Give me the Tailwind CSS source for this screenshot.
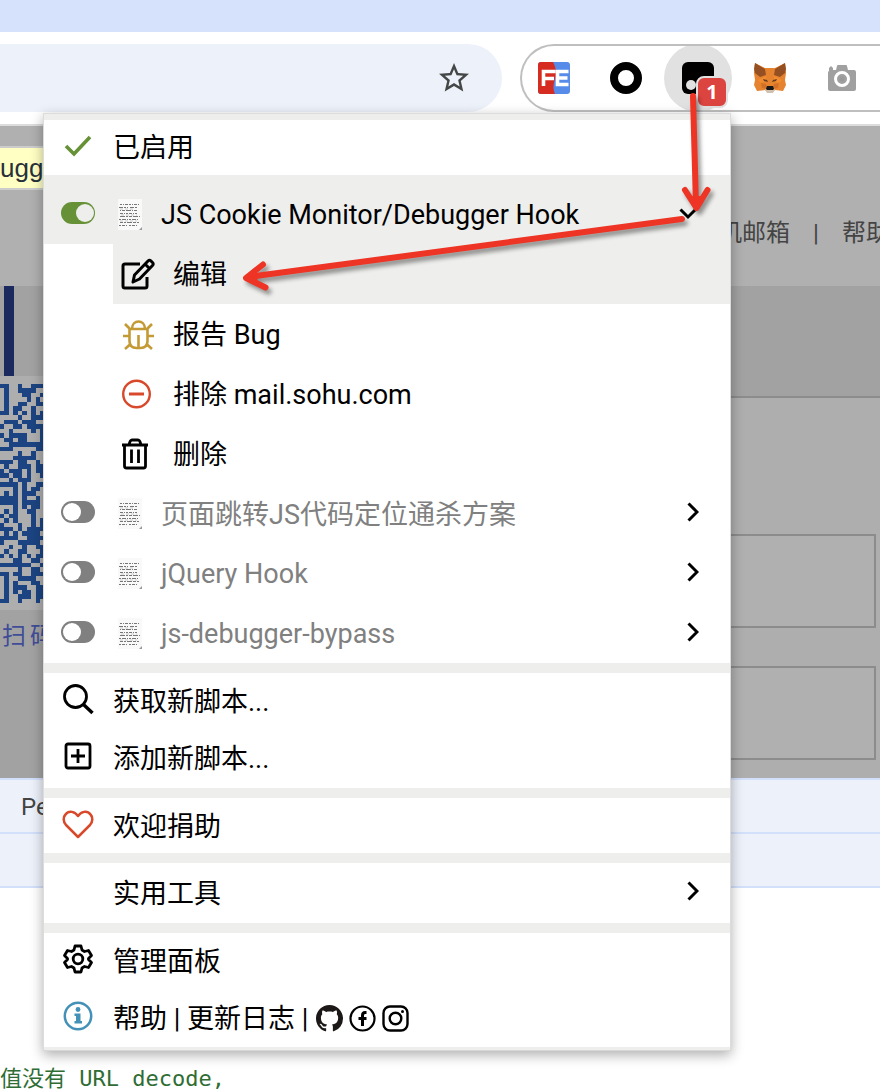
<!DOCTYPE html>
<html lang="zh-CN">
<head>
<meta charset="utf-8">
<meta name="viewport" content="width=device-width, initial-scale=1">
<title>Tampermonkey</title>
<script src="https://cdn.jsdelivr.net/npm/@tailwindcss/browser@4"></script>
</head>
<body class="relative min-h-screen overflow-x-hidden bg-white font-['Roboto','Noto_Sans_CJK_SC',sans-serif] text-black">

<!-- Shared icons -->
<svg class="hidden" aria-hidden="true">
  <symbol id="chevron" viewBox="0 0 12 20"><path d="M1.500 1.500 10 10 1.500 18.500" fill="none" stroke="#000" stroke-width="3"/></symbol>
  <symbol id="paper" viewBox="0 0 24 32">
    <rect width="24" height="31" fill="#f9f9f9"/>
    <g fill="none" stroke="#777" stroke-width="1">
      <path d="M2 5.500h19" stroke-dasharray="2 1 1 1 3 1"/>
      <path d="M1 8.500h19" stroke-dasharray="4 1 2 1 1 2"/>
      <path d="M2 11.500h17" stroke-dasharray="1 1 3 1 5 1"/>
      <path d="M2 14.500h18" stroke-dasharray="3 1 1 1 2 1"/>
      <path d="M2 17.500h20" stroke-dasharray="5 1 2 1 3 1"/>
      <path d="M1 20.500h20" stroke-dasharray="2 1 4 1 1 1"/>
      <path d="M2 23.500h19" stroke-dasharray="3 1 2 1 5 1"/>
      <path d="M1 26.500h20" stroke-dasharray="2 1 3 1 1 2"/>
    </g>
    <path d="M2 10h15M3 16h16M2 22h17" stroke="#ccc" stroke-width="1" stroke-dasharray="3 2"/>
    <path d="M24 28v3h-3z" fill="#999"/>
  </symbol>
</svg>

<!-- Browser chrome -->
<div class="h-8 bg-[#d6e1fc]"></div>
<header class="flex h-[92px] items-start gap-[18px] pt-3">
  <div class="flex h-17 w-[502px] shrink-0 items-center justify-end rounded-r-full bg-[#edf1fa] pr-[30px]">
    <button aria-label="收藏"><svg class="size-9" viewBox="0 0 24 24" fill="#444746"><path d="m22 9.240-7.190-.62L12 2 9.190 8.630 2 9.240l5.460 4.730L5.820 21 12 17.270 18.180 21l-1.630-7.030L22 9.240zM12 15.400l-3.760 2.270 1-4.280-3.320-2.880 4.380-.38L12 6.100l1.710 4.040 4.380.38-3.320 2.880 1 4.280L12 15.400z"/></svg></button>
  </div>
  <div class="flex h-17 flex-1 items-center overflow-hidden rounded-l-full border-2 border-r-0 border-[#bfbfbf] pl-4">
    <button class="mr-10 shrink-0" aria-label="FeHelper">
      <svg class="size-8" viewBox="0 0 32 32"><rect width="32" height="32" rx="3" fill="#568bea"/><path d="M3 0h12c3 6 4 11 2 17s-2 10 0 15H3a3 3 0 0 1-3-3V3a3 3 0 0 1 3-3z" fill="#d62b21"/><path d="M17.500 9.500H5.500V24M6 16.500h10M30.500 9.500H19.500v13h11M19 16h10.500" fill="none" stroke="#fff" stroke-width="3.600"/></svg>
    </button>
    <button class="mr-[22px] shrink-0" aria-label="扩展">
      <svg class="size-8" viewBox="0 0 32 32"><circle cx="16" cy="16" r="12" fill="none" stroke="#000" stroke-width="8"/></svg>
    </button>
    <button class="relative mr-[22px] flex size-17 shrink-0 items-center justify-center rounded-full bg-[#e1e1e1]" aria-label="Tampermonkey">
      <svg class="size-8" viewBox="0 0 32 32"><rect width="32" height="32" rx="6"/><circle cx="9" cy="23" r="5" fill="#e1e1e1"/></svg>
      <span class="absolute top-8 left-8 flex size-8 items-center justify-center rounded-lg border-2 border-[#e1e1e1] bg-[#dc443f] font-['Open_Sans',sans-serif] text-xl font-bold text-white">1</span>
    </button>
    <button class="mr-10 shrink-0" aria-label="MetaMask">
      <svg class="size-8" viewBox="0 0 32 32">
        <path d="M1 1l10 5h10l10-5 1 10-1 7 1 5-3 6-8-1-3 3h-4l-3-3-8 1-3-6 1-5-1-7z" fill="#e5832f"/>
        <path d="M1 1l10 6 1 6-6 2-5-4-1-4zM31 1l-10 6-1 6 6 2 5-4 1-4z" fill="#945022"/>
        <path d="M4 18l8-4v5l-5 2zM28 18l-8-4v5l5 2z" fill="#f28c2e"/>
        <path d="M7 21l5 1 2 5-6-1zM25 21l-5 1-2 5 6-1z" fill="#d27028"/>
        <path d="M9 17l4 1 1 2-4-1zM23 17l-4 1-1 2 4-1z" fill="#623c27"/>
        <path d="M11 27h10l-2 4h-6z" fill="#d0c2b2"/><path d="M13 24h6l1 3-1 1h-6l-1-1z" fill="#171717"/>
      </svg>
    </button>
    <button class="shrink-0" aria-label="截图">
      <svg class="size-8" viewBox="0 0 32 32"><path d="M3 9V6l2-2 2 2v2h3l1-4q0-1 1-1h8q1 0 1 1l1 4h6q2 0 2 2v17q0 2-2 2H4q-2 0-2-2V11q0-2 1-2z" fill="#a0a0a0"/><circle cx="16" cy="17" r="6.500" fill="#a0a0a0" stroke="#fff" stroke-width="3"/><circle cx="16" cy="17" r="2.500" fill="#999"/></svg>
    </button>
  </div>
</header>

<!-- Dimmed web page -->
<main class="border-t-2 border-[#dcdcdc] text-[#444]">
  <div class="flex h-40 items-start bg-[#b0b0b0]">
    <div class="mt-5 h-11 w-[120px] shrink-0 border-y-2 border-[#ccc] bg-[#ffffc4] font-['Liberation_Sans',sans-serif] text-[26px] leading-10 text-[#27303a]">ugg</div>
    <div class="mt-[89px] flex pl-[598px] text-2xl leading-9 whitespace-nowrap"><span>机邮箱</span><span class="w-[52px] text-center">|</span><span>帮助</span></div>
  </div>
  <div class="flex h-[112px] border-b-2 border-[#8c8c8c] bg-[#a2a2a2]">
    <div class="h-[90px] w-[44px] pl-1"><div class="h-full w-[10px] bg-[#1b2a5e]"></div></div>
  </div>
  <div class="flex h-[380px] bg-[#aeaeae]">
    <aside class="w-[52px] shrink-0 bg-[#a2a2a2]">
      <div class="-mt-[22px] h-[234px] bg-[#aeaeae] pt-2"><svg id="qr" class="h-[219px] w-[49px]" viewBox="0 0 11 49" preserveAspectRatio="none" fill="#1c4482" shape-rendering="crispEdges"></svg></div>
      <div class="flex gap-1 pt-[6px] pl-[2px] text-2xl leading-10 whitespace-nowrap text-[#3f4c97]"><span>扫</span><span>码</span></div>
    </aside>
    <form class="flex flex-1 flex-col gap-[38px] pt-[136px] pr-1 pl-[300px]">
      <input class="h-[94px] w-full border-2 border-[#8c8c8c] bg-[#b0b0b0]" aria-label="账号">
      <input class="h-[94px] w-full border-2 border-[#8c8c8c] bg-[#b0b0b0]" type="password" aria-label="密码">
    </form>
  </div>
</main>

<!-- DevTools -->
<section class="font-['Roboto',sans-serif] text-[#444]">
  <div class="h-14 border-y-2 border-[#d3e0fb] bg-[#edf1fa] pl-[21px] text-2xl leading-[54px]">Pe</div>
  <div class="h-[54px] border-b-2 border-[#d3e0fb] bg-[#edf1fa]"></div>
  <pre class="h-[204px] overflow-hidden pt-[178px] font-['DejaVu_Sans_Mono','Noto_Sans_CJK_SC',monospace] text-[22px] leading-[26px] text-[#2f6d34]">值没有 URL decode,</pre>
</section>

<!-- Extension popup -->
<nav class="absolute top-[113px] right-[149px] left-[43px] border border-[#dcdcdc] border-b-[#d8d8d8] bg-white text-[27px] leading-9 whitespace-nowrap shadow-[0_4px_12px_rgba(0,0,0,0.32)]">
  <div class="h-[6px] bg-[#eeeeec]"></div>
  <button class="flex h-[55px] w-full items-center text-left">
    <span class="w-[69px] pb-1 pl-5"><svg class="h-6 w-7" viewBox="0 0 28 24"><path d="M2 12l8 8L26 3" fill="none" stroke="#669136" stroke-width="3.600"/></svg></span>已启用
  </button>

  <div class="flex h-[69px] items-center bg-[#eeeeec] pt-[10px] pr-[33px]">
    <span class="flex w-[74px] pb-1 pl-[17px]"><input type="checkbox" checked aria-label="JS Cookie Monitor/Debugger Hook" class="h-[22px] w-[34px] appearance-none rounded-full bg-[#669136] p-[2px] before:ml-[13px] before:block before:size-[18px] before:rounded-full before:bg-[#eeeeec] before:content-['']"></span>
    <svg class="mr-[19px] h-8 w-6"><use href="#paper"/></svg>
    <span class="flex-1">JS Cookie Monitor/Debugger Hook</span>
    <button class="pb-[2px]" aria-label="收起"><svg class="h-3 w-[18px]" viewBox="0 0 18 12"><path d="M1.500 1.500 9 9l7.500-7.500" fill="none" stroke="#000" stroke-width="3"/></svg></button>
  </div>

  <div class="pl-[69px]">
    <button class="flex h-[60px] w-full items-center bg-[#eeeeec] pt-[2px] pl-2 text-left">
      <span class="w-[52px] pb-[2px]"><svg class="size-[34px]" viewBox="0 0 34 34" fill="none" stroke="#000" stroke-width="3" stroke-linejoin="round"><path d="M19 7H4q-2 0-2 2v20q0 2 2 2h20q2 0 2-2v-9"/><path d="M12 25l1.500-7L27 4q1.500-1.500 3 0l1.500 1.500q1.500 1.500 0 3L18.500 22zM24 7l5 5"/></svg></span>编辑
    </button>
    <button class="flex h-[60px] w-full items-center pt-[2px] pl-2 text-left">
      <span class="w-[52px] pb-[2px]"><svg class="size-[34px]" viewBox="0 0 34 34" fill="none" stroke="#c49a35" stroke-width="2.600"><path d="M8.500 12h18v12q0 7-7 7h-4q-7 0-7-7zM11 12c0-10 13-10 13 0M17.500 18v13M8.500 19H2M26.500 19H33M9 12L4 7M26 12l5-5M9.500 27L4 32M25.500 27l5.500 5"/></svg></span>报告 Bug
    </button>
    <button class="flex h-[60px] w-full items-center pt-[2px] pl-2 text-left">
      <span class="w-[52px] pb-[2px]"><svg class="size-[34px]" viewBox="0 0 34 34" fill="none" stroke="#d7492a"><circle cx="15.500" cy="17" r="13.300" stroke-width="2.400"/><path d="M8 17h15" stroke-width="3"/></svg></span>排除 mail.sohu.com
    </button>
    <button class="flex h-[60px] w-full items-center pt-[2px] pl-2 text-left">
      <span class="w-[52px] pb-[2px]"><svg class="size-[34px]" viewBox="0 0 34 34" fill="none" stroke="#000" stroke-width="2.800"><path d="M1 8h26M3.500 8v21q0 2 2 2h17q2 0 2-2V8M8 8q1-5 3-5h6q2 0 3 5M10.500 12.500V26M17.500 12.500V26"/></svg></span>删除
    </button>
  </div>

  <div class="flex h-[60px] items-center pr-[31px] text-[#808080]">
    <span class="flex w-[74px] pb-1 pl-[17px]"><input type="checkbox" aria-label="页面跳转JS代码定位通杀方案" class="h-[22px] w-[34px] appearance-none rounded-full bg-[#808080] p-[2px] before:block before:size-[18px] before:rounded-full before:bg-white before:content-['']"></span>
    <svg class="mr-[19px] h-8 w-6"><use href="#paper"/></svg><span class="flex-1 pt-[2px]">页面跳转JS代码定位通杀方案</span>
    <button class="pb-1" aria-label="展开"><svg class="h-5 w-3"><use href="#chevron"/></svg></button>
  </div>
  <div class="flex h-[60px] items-center pr-[31px] text-[#808080]">
    <span class="flex w-[74px] pb-1 pl-[17px]"><input type="checkbox" aria-label="jQuery Hook" class="h-[22px] w-[34px] appearance-none rounded-full bg-[#808080] p-[2px] before:block before:size-[18px] before:rounded-full before:bg-white before:content-['']"></span>
    <svg class="mr-[19px] h-8 w-6"><use href="#paper"/></svg><span class="flex-1">jQuery Hook</span>
    <button class="pb-1" aria-label="展开"><svg class="h-5 w-3"><use href="#chevron"/></svg></button>
  </div>
  <div class="flex h-[59px] items-center pr-[31px] text-[#808080]">
    <span class="flex w-[74px] pb-1 pl-[17px]"><input type="checkbox" aria-label="js-debugger-bypass" class="h-[22px] w-[34px] appearance-none rounded-full bg-[#808080] p-[2px] before:block before:size-[18px] before:rounded-full before:bg-white before:content-['']"></span>
    <svg class="mr-[19px] h-8 w-6"><use href="#paper"/></svg><span class="flex-1">js-debugger-bypass</span>
    <button class="pb-1" aria-label="展开"><svg class="h-5 w-3"><use href="#chevron"/></svg></button>
  </div>

  <div class="h-[10px] bg-[#eeeeec]"></div>
  <button class="flex h-[57px] w-full items-center text-left">
    <span class="w-[69px] pb-[6px] pl-[18px]"><svg class="size-8" viewBox="0 0 32 32" fill="none" stroke="#000"><circle cx="13.500" cy="13.500" r="11" stroke-width="2.800"/><path d="M21.500 21.500l9 8.500" stroke-width="3.400"/></svg></span>获取新脚本...
  </button>
  <button class="flex h-[58px] w-full items-center text-left">
    <span class="w-[69px] pb-[6px] pl-[18px]"><svg class="size-8" viewBox="0 0 32 32" fill="none" stroke="#000" stroke-width="2.800"><rect x="4" y="4" width="24" height="24" rx="2"/><path d="M16 9v14M9 16h14"/></svg></span>添加新脚本...
  </button>
  <div class="h-[10px] bg-[#eeeeec]"></div>
  <button class="flex h-[55px] w-full items-center pt-[2px] text-left">
    <span class="w-[69px] pb-[6px] pl-[18px]"><svg class="size-8" viewBox="0 0 32 32" fill="none" stroke="#d7492a" stroke-width="2.500" stroke-linejoin="round"><path d="M16 29L4 17C1 13.500 1 9 3.500 6.500 7 2 13 3.500 16 8c3-4.500 9-6 12.500-1.500C31 9 31 13.500 28 17z"/></svg></span>欢迎捐助
  </button>
  <div class="h-[10px] bg-[#eeeeec]"></div>
  <button class="flex h-[60px] w-full items-center pt-[2px] pr-[31px] pl-[69px] text-left">
    <span class="flex-1">实用工具</span><span class="pb-[6px]"><svg class="h-5 w-3"><use href="#chevron"/></svg></span>
  </button>
  <div class="h-[10px] bg-[#eeeeec]"></div>
  <button class="flex h-[57px] w-full items-center text-left">
    <span class="w-[69px] pb-[6px] pl-[18px]"><svg class="size-8" viewBox="0 0 32 32" fill="none" stroke="#000" stroke-width="2.800" stroke-linejoin="round"><circle cx="16" cy="16" r="4.800"/><path d="M13 3h6l1 4 2.500 1.500L26.500 7.500l3 5L26.500 15.500v1L29.500 19.500l-3 5-4-1L20 25l-1 4h-6l-1-4-2.500-1.500-4 1-3-5 3-3v-1l-3-3 3-5 4 1L12 7z"/></svg></span>管理面板
  </button>
  <div class="flex h-[57px] items-center">
    <span class="w-[69px] pb-[6px] pl-[18px]"><svg class="size-8" viewBox="0 0 32 32"><circle cx="16" cy="16" r="13.200" fill="none" stroke="#4391b8" stroke-width="2.500"/><circle cx="16" cy="9.500" r="2.400" fill="#4391b8"/><path d="M12.500 13.500h6V21h1.500v2.500h-7.500V21H14v-5h-1.500z" fill="#4391b8"/></svg></span>
    <span><a href="#help">帮助</a> | <a href="#changelog">更新日志</a> |</span>
    <span class="flex gap-[6px] pl-2">
      <a href="#github" aria-label="GitHub"><svg class="size-[27px]" viewBox="0 0 16 16"><path fill="#1b1817" d="M8 0C3.580 0 0 3.580 0 8c0 3.540 2.290 6.530 5.470 7.590.4.070.55-.17.55-.38 0-.19-.01-.82-.01-1.490-2.010.37-2.530-.49-2.690-.94-.09-.23-.48-.94-.82-1.130-.28-.15-.68-.52-.01-.53.63-.01 1.080.58 1.230.82.72 1.210 1.870.87 2.330.66.07-.52.28-.87.51-1.070-1.780-.2-3.640-.89-3.640-3.950 0-.87.31-1.590.82-2.150-.08-.2-.36-1.020.08-2.120 0 0 .67-.21 2.200.82.64-.18 1.320-.27 2-.27s1.360.09 2 .27c1.530-1.040 2.200-.82 2.200-.82.44 1.100.16 1.920.08 2.120.51.56.82 1.270.82 2.150 0 3.070-1.870 3.750-3.650 3.950.29.25.54.73.54 1.480 0 1.070-.01 1.930-.01 2.200 0 .21.15.46.55.38A8.010 8.010 0 0 0 16 8c0-4.420-3.580-8-8-8z"/></svg></a>
      <a href="#facebook" aria-label="Facebook"><svg class="size-[27px]" viewBox="0 0 27 27" fill="none" stroke="#000"><circle cx="13.500" cy="13.500" r="12" stroke-width="2.200"/><path d="M17.500 7.500h-1.500q-2.500 0-2.500 3V21M9.500 13.500h8" stroke-width="3"/></svg></a>
      <a href="#instagram" aria-label="Instagram"><svg class="size-[27px]" viewBox="0 0 27 27" fill="none" stroke="#000" stroke-width="2.400"><rect x="1.500" y="1.500" width="24" height="24" rx="6.500"/><circle cx="13.500" cy="13.500" r="5.800"/><circle cx="20.500" cy="6.500" r="1.500" fill="#000" stroke="none"/></svg></a>
    </span>
  </div>
  <div class="h-[3px] bg-[#eeeeec]"></div>
</nav>

<!-- Annotation arrows -->
<svg class="pointer-events-none absolute top-0 right-0 h-[320px] w-[880px] drop-shadow-[3px_4px_2px_rgba(0,0,0,0.4)]" viewBox="0 0 880 320" fill="none" stroke="#ee3424" stroke-width="6" stroke-linecap="round" stroke-linejoin="round" aria-hidden="true">
  <path d="M693 96L696 206"/><path d="M690 196L696.500 208 702 196z" fill="#ee3424" stroke="none"/><path d="M685 190L696.500 208 707.500 190"/>
  <path d="M682 219L248 277"/><path d="M256 269L246 278 258 283z" fill="#ee3424" stroke="none"/><path d="M263 264.500L246 278 265.500 287.500"/>
</svg>

<script>
  const rows = `11001001111
01001111000
01000110011
01000010100
01001100110
01011001000
11010101010
00001001110
01110111001
10011011111
00100001011
10111100011
01101100011
00111111111
11100000111
00001001001
00011111001
11101100100
01001110111
10111010110
11011010011
00101110000
11110100110
00010101101
01010111001
11110100101
11110111101
00010101101
01010011001
10110001000
01010001010
10001001011
11101011110
01010111100
11110011110
10001111100
00100100111
01001100010
10101010111
00011001100
11111110011
00001001101
11011001111
01001111001
01010001100
01011100110
01010110111
01001110110
11001000101`.split("\n");
  document.getElementById("qr").innerHTML = rows.map((row, y) =>
    [...row].map((c, x) => c === "1" ? `<rect x="${x}" y="${y}" width="1" height="1"/>` : "").join("")
  ).join("");
</script>
</body>
</html>
